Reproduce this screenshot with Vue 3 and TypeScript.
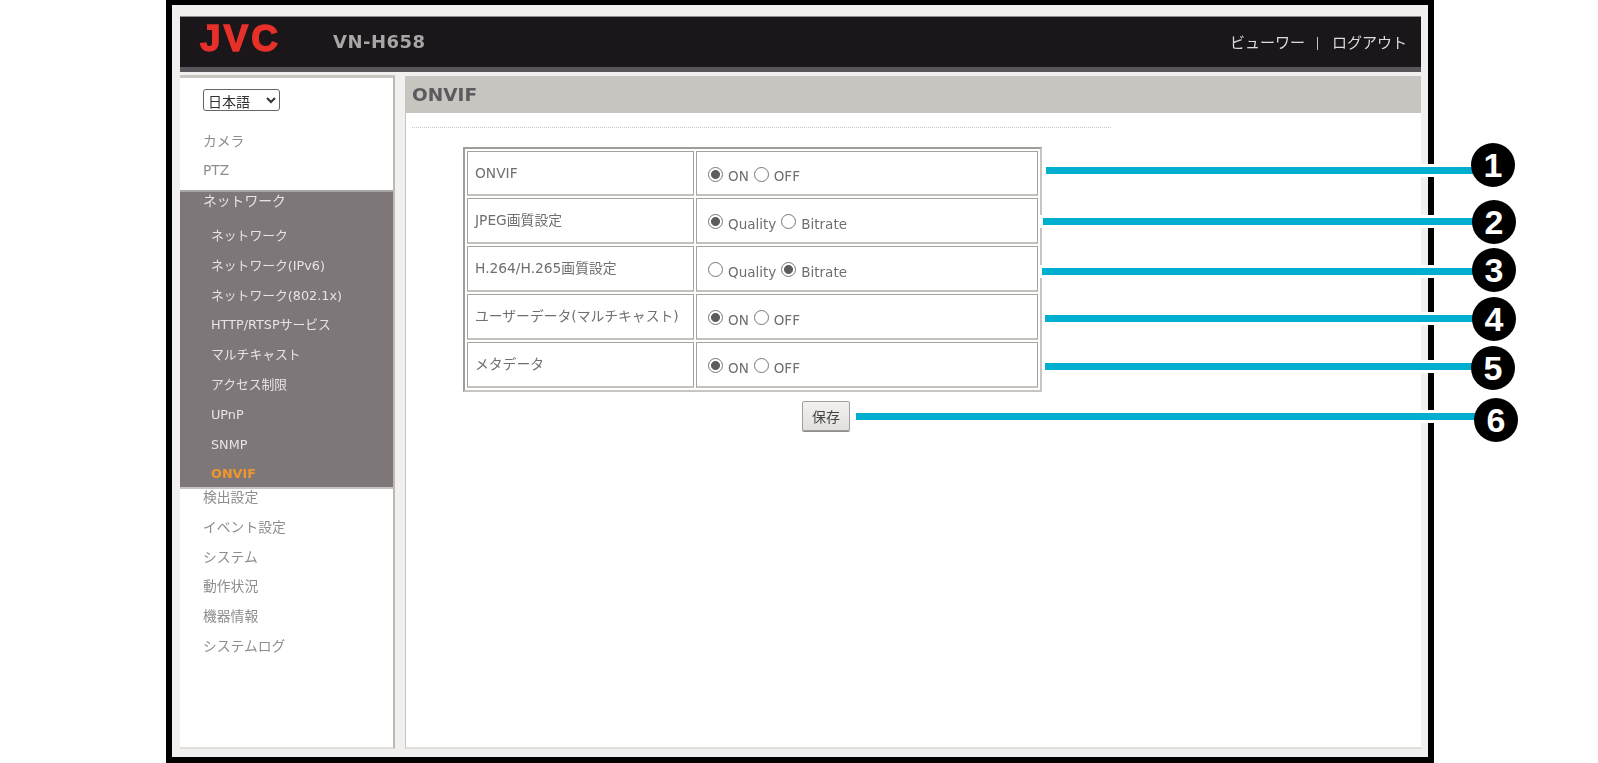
<script setup lang="ts">
const topItems: string[] = ['カメラ', 'PTZ']
const networkItems: string[] = [
  'ネットワーク',
  'ネットワーク(IPv6)',
  'ネットワーク(802.1x)',
  'HTTP/RTSPサービス',
  'マルチキャスト',
  'アクセス制限',
  'UPnP',
  'SNMP',
  'ONVIF',
]
const bottomItems: string[] = ['検出設定', 'イベント設定', 'システム', '動作状況', '機器情報', 'システムログ']

interface Row {
  id: string
  label: string
  options: [string, string]
  selected: number
}
const rows: Row[] = [
  { id: 'onvif', label: 'ONVIF', options: ['ON', 'OFF'], selected: 0 },
  { id: 'jpeg', label: 'JPEG画質設定', options: ['Quality', 'Bitrate'], selected: 0 },
  { id: 'h264', label: 'H.264/H.265画質設定', options: ['Quality', 'Bitrate'], selected: 1 },
  { id: 'user', label: 'ユーザーデータ(マルチキャスト)', options: ['ON', 'OFF'], selected: 0 },
  { id: 'meta', label: 'メタデータ', options: ['ON', 'OFF'], selected: 0 },
]

const callouts = [
  { n: 1, x: 1046, y: 167, cx: 1493, cy: 165 },
  { n: 2, x: 1043, y: 218, cx: 1494, cy: 222 },
  { n: 3, x: 1042, y: 268, cx: 1494, cy: 270 },
  { n: 4, x: 1045, y: 315, cx: 1494, cy: 319 },
  { n: 5, x: 1045, y: 363, cx: 1493, cy: 368 },
  { n: 6, x: 856, y: 413, cx: 1496, cy: 420 },
]
</script>

<template>
  <div class="page">
    <div class="frame">
      <header class="top">
        <div class="top-dark">
          <span class="logo">JVC</span>
          <span class="model">VN-H658</span>
          <nav class="top-links">
            <span>ビューワー</span>
            <span class="sep"></span>
            <span>ログアウト</span>
          </nav>
        </div>
      </header>

      <div class="body">
        <aside class="side">
          <select class="lang">
            <option>日本語</option>
          </select>
          <ul class="menu menu-top">
            <li v-for="item in topItems" :key="item">{{ item }}</li>
          </ul>
          <div class="group">
            <div class="group-head">ネットワーク</div>
            <ul class="menu sub">
              <li v-for="item in networkItems" :key="item" :class="{ active: item === 'ONVIF' }">{{ item }}</li>
            </ul>
          </div>
          <ul class="menu menu-bottom">
            <li v-for="item in bottomItems" :key="item">{{ item }}</li>
          </ul>
        </aside>

        <main class="main">
          <h1 class="title">ONVIF</h1>
          <div class="dots"></div>
          <table class="settings">
            <tbody>
              <tr v-for="row in rows" :key="row.id">
                <td class="label">{{ row.label }}</td>
                <td class="value">
                  <div class="radios">
                    <label v-for="(opt, i) in row.options" :key="opt" class="radio">
                      <input type="radio" :name="row.id" :checked="row.selected === i" />
                      <span>{{ opt }}</span>
                    </label>
                  </div>
                </td>
              </tr>
            </tbody>
          </table>
          <button class="save" type="button">保存</button>
        </main>
      </div>
    </div>

    <template v-for="c in callouts" :key="c.n">
      <div class="line" :style="{ left: c.x + 'px', top: c.y + 'px', width: c.cx - c.x + 'px' }"></div>
      <div class="badge" :style="{ left: c.cx - 22 + 'px', top: c.cy - 22 + 'px' }">{{ c.n }}</div>
    </template>
  </div>
</template>

<style scoped>
.page {
  position: relative;
  width: 1598px;
  height: 763px;
  overflow: hidden;
  background: #fff;
  font-family: "DejaVu Sans", "Noto Sans CJK JP", sans-serif;
}
.frame {
  box-sizing: border-box;
  width: 1268px;
  height: 763px;
  margin-left: 166px;
  border: 6px solid #000;
  border-top-width: 5px;
  background: #f1f0ee;
  padding: 11px 7px 8px 8px;
  display: flex;
  flex-direction: column;
  filter: blur(0.45px);
}

/* header */
.top {
  height: 56px;
  flex: none;
  border-bottom: 5px solid #59555a;
  box-sizing: border-box;
  background: #1a1619;
}
.top-dark {
  height: 51px;
  display: flex;
  align-items: center;
  box-shadow: inset 0 1px 0 #8d8a8a;
  padding: 0 14px 0 20px;
}
.logo {
  font-family: "Liberation Sans", Arial, sans-serif;
  font-weight: 700;
  font-size: 37px;
  line-height: 1;
  letter-spacing: 3px;
  color: #e8302a;
  -webkit-text-stroke: 1.4px #e8302a;
  width: 133px;
  margin-top: -6px;
}
.model {
  font-weight: 700;
  font-size: 18px;
  color: #a8a6a6;
  letter-spacing: 0.5px;
}
.top-links {
  margin-left: auto;
  display: flex;
  align-items: center;
  font-size: 15px;
  color: #dcdcdc;
}
.sep {
  width: 1px;
  height: 13px;
  margin: 3px 14px 0 12px;
  background: #c4c4c4;
}

/* body */
.body {
  flex: 1;
  display: flex;
  margin-top: 3px;
  min-height: 0;
}
.side {
  box-sizing: border-box;
  width: 215px;
  flex: none;
  background: #fff;
  border-top: 3px solid #c8c5c1;
  border-right: 2px solid #bdbab6;
  border-bottom: 2px solid #dfdedb;
}
.lang {
  display: block;
  box-sizing: border-box;
  width: 77px;
  height: 22px;
  margin: 11px 0 16px 23px;
  background: #fff;
  border: 1px solid #666;
  border-radius: 3px;
  font-family: "Noto Sans CJK JP", sans-serif;
  font-size: 14px;
  color: #333;
  padding: 0;
}
.menu {
  list-style: none;
  margin: 0;
  padding: 0;
}
.menu li {
  padding-left: 23px;
  font-size: 13.8px;
  color: #8d8d8d;
}
.menu-top {
  margin-bottom: 5px;
}
.menu-top li {
  height: 29px;
  line-height: 29px;
}
.group {
  background: #7d777a;
  border-top: 2px solid #a9a5a6;
  border-bottom: 2px solid #c6c3c3;
}
.group-head {
  height: 29px;
  line-height: 18px;
  padding-left: 23px;
  font-size: 13.8px;
  color: #e6e4e4;
}
.menu.sub {
  margin-bottom: -2px;
}
.menu.sub li {
  height: 29.8px;
  line-height: 29.8px;
  padding-left: 31px;
  font-size: 12.8px;
  color: #e6e4e4;
}
.menu.sub li.active {
  color: #f0962a;
  font-weight: 700;
}
.menu-bottom {
  margin-top: -6px;
}
.menu-bottom li {
  height: 29.7px;
  line-height: 29.7px;
}

/* main */
.main {
  box-sizing: border-box;
  width: 1016px;
  margin: 1px 0 0 10px;
  background: #fff;
  border-left: 1px solid #c8c5c1;
  border-bottom: 2px solid #dfdedb;
}
.title {
  margin: 0;
  height: 37px;
  line-height: 38px;
  background: #c8c5c1;
  padding-left: 6px;
  font-size: 18.5px;
  font-weight: 700;
  color: #5d5a5e;
}
.dots {
  width: 699px;
  margin: 14px 0 0 6px;
  border-top: 1px dotted #c9c9c9;
}
.settings {
  box-sizing: border-box;
  table-layout: fixed;
  width: 579px;
  margin: 19px 0 0 57px;
  border-collapse: separate;
  border-spacing: 2px;
  border: 2px solid;
  border-color: #9f9c99 #c8c5c1 #c8c5c1 #9f9c99;
}
.settings tr {
  height: 46px;
}
.settings tr:first-child {
  height: 45px;
}
.settings td {
  box-sizing: border-box;
  padding: 0;
  border: 1px solid;
  border-color: #a5a3a0 #a5a3a0 #c4c2bf #a5a3a0;
  border-bottom-width: 2px;
  color: #6f6f6f;
}
.settings td.label {
  width: 227px;
  padding: 0 0 3px 7px;
  font-size: 13.8px;
}
.settings tr:first-child td.label {
  padding-bottom: 0;
}
.radios {
  display: flex;
  gap: 5px;
  padding: 2px 0 0 11px;
}
.radio {
  display: flex;
  align-items: center;
  gap: 5px;
  font-size: 13.5px;
  color: #6f6f6f;
}
.radio span {
  padding-top: 4px;
}
.radio input {
  appearance: none;
  -webkit-appearance: none;
  box-sizing: border-box;
  width: 15px;
  height: 15px;
  margin: 0;
  border: 1px solid #777;
  border-radius: 50%;
  background: #fff;
}
.radio input:checked {
  background: radial-gradient(circle, #5f5c5e 0 4px, #fff 5px);
}
.save {
  display: block;
  box-sizing: border-box;
  width: 48px;
  height: 30px;
  margin: 9px 0 0 396px;
  padding: 0;
  background: linear-gradient(#f2f1ef, #e2e0dd);
  border: 1px solid #a09d9a;
  border-radius: 2px;
  box-shadow: 0 1px 0 #8f8c89;
  font-family: "Noto Sans CJK JP", sans-serif;
  font-size: 14px;
  color: #444;
}

/* callouts */
.line {
  position: absolute;
  height: 7px;
  background: #00afcf;
  box-shadow: 0 0 0 3px #fff;
}
.badge {
  position: absolute;
  width: 44px;
  height: 44px;
  border-radius: 50%;
  background: #000;
  color: #fff;
  font-family: "Liberation Sans", Arial, sans-serif;
  font-weight: 700;
  font-size: 34px;
  line-height: 44px;
  text-align: center;
}
</style>
